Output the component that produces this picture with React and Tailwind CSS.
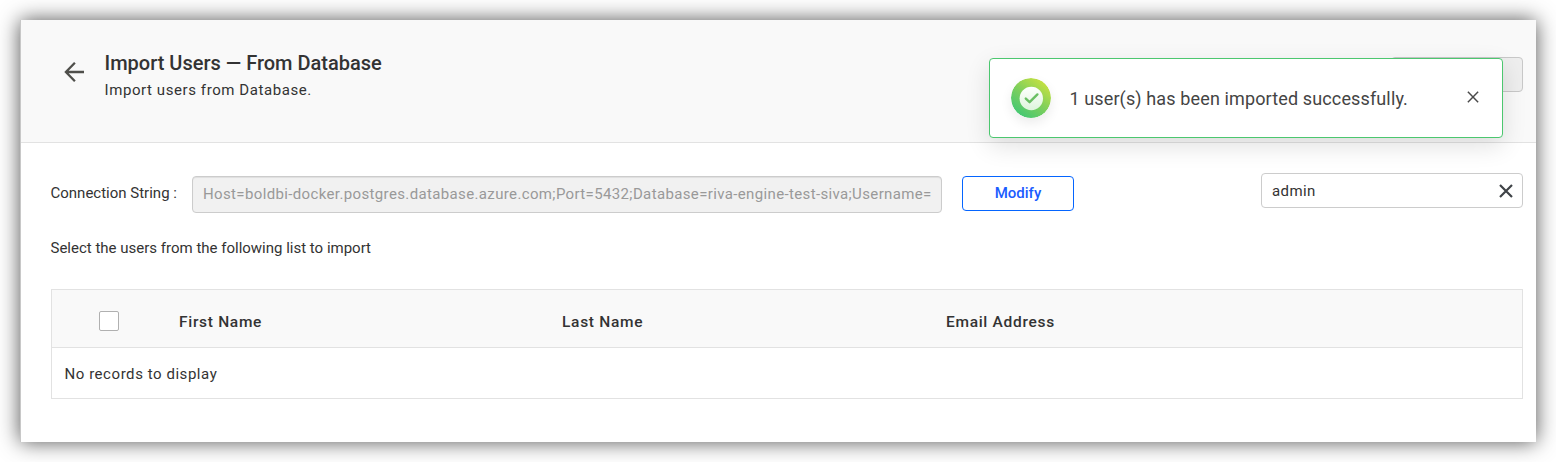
function BackArrow() {
  return (
    <svg className="h-5 w-5" viewBox="0 0 20 20" fill="none" stroke="#4f4f4b" strokeWidth="2.3">
      <path d="M20.5 10H2M10.9 0.8L1.9 10l9 9.2" />
    </svg>
  );
}

function SuccessIcon() {
  return (
    <svg className="h-10 w-10 rounded-full shadow-[0_5px_12px_rgba(0,0,0,0.08)]" viewBox="0 0 40 40" fill="none">
      <defs>
        <linearGradient id="ring" x1="8" y1="36" x2="32" y2="4" gradientUnits="userSpaceOnUse">
          <stop stopColor="#46c872" />
          <stop offset="0.5" stopColor="#7fcf5c" />
          <stop offset="1" stopColor="#c2e042" />
        </linearGradient>
        <linearGradient id="disc" x1="20" y1="8" x2="20" y2="32" gradientUnits="userSpaceOnUse">
          <stop stopColor="#ffffff" />
          <stop offset="1" stopColor="#def5dc" />
        </linearGradient>
      </defs>
      <circle cx="20" cy="20" r="20" fill="url(#ring)" />
      <circle cx="20.3" cy="20.5" r="11.7" fill="url(#disc)" />
      <path d="M14.8 20.6l3.8 3.6 7.8-7.8" stroke="#69bf63" strokeWidth="2.4" strokeLinecap="round" strokeLinejoin="round" />
    </svg>
  );
}

function Cross({ className, width }) {
  return (
    <svg className={className} viewBox="0 0 14 14" fill="none" stroke="currentColor" strokeWidth={width}>
      <path d="M1 1l12 12M13 1L1 13" />
    </svg>
  );
}

function Toast() {
  return (
    <div className="absolute top-[38px] right-[33px] flex h-20 w-[514px] items-center rounded-[4px] border border-[#4cc76f] bg-white pr-[23px] pl-[21.4px] shadow-[0_8px_24px_rgba(0,0,0,0.12)]">
      <SuccessIcon />
      <span className="mt-[2px] ml-[18px] flex-1 text-[18px] leading-6 tracking-[0.13px] text-[#444444]">1 user(s) has been imported successfully.</span>
      <Cross className="mb-[2px] h-3 w-3 text-[#4a4a4a]" width={1.7} />
    </div>
  );
}

export default function App() {
  return (
    <div className="h-[462px] w-[1556px] overflow-hidden bg-white pt-5 pl-5 font-[Roboto,sans-serif] text-[15px] text-[#333333]">
      <div className="relative flex h-[422px] w-[1516px] flex-col border-l border-[#c8c8c8] bg-white shadow-[0_0_20px_rgba(0,0,0,0.68)]">
        <header className="flex h-[123px] items-start justify-between border-b border-[#e2e2e2] bg-[#f9f9f9] pr-[13px] pl-[43px]">
          <div className="flex">
            <div className="pt-[42px]"><BackArrow /></div>
            <div className="ml-[20.5px] pt-[31px]">
              <h1 className="text-[20px] leading-6 font-medium">Import Users — From Database</h1>
              <p className="mt-[5px] leading-5 tracking-[0.58px]">Import users from Database.</p>
            </div>
          </div>
          <button className="mt-[37px] h-[35px] w-[132px] rounded-[4px] border border-[#c8c8c8] bg-[#eeeeee]" />
        </header>

        <main className="flex flex-col pr-[13px] pl-[30px]">
          <div className="mt-[30px] flex items-start">
            <label className="mt-[10px] -ml-[0.5px] w-[141.5px] leading-5">Connection String :</label>
            <div className="mt-[3px] h-[37px] w-[750px] rounded-[4px] border border-[#cccccc] bg-[#f1f1f1] px-[10px] shadow-[inset_0_1px_1px_rgba(0,0,0,0.075)]">
              <div className="leading-[35px] tracking-[0.362px] whitespace-nowrap text-[#999999]">
                Host=boldbi-docker.postgres.database.azure.com;Port=5432;Database=riva-engine-test-siva;Username=
              </div>
            </div>
            <button className="mt-[3px] ml-5 h-[35px] w-28 rounded-[4px] border border-[#0565ff] leading-[33px] font-medium text-[#1a5cff]">Modify</button>
            <div className="ml-auto flex h-[35px] w-[262px] items-center justify-between rounded-[4px] border border-[#cccccc] pr-[9px] pl-[10px]">
              <span className="leading-5 tracking-[0.4px]">admin</span>
              <Cross className="mt-[1px] h-[14px] w-[14px] text-[#3f4347]" width={2.2} />
            </div>
          </div>

          <p className="mt-[25px] -ml-[0.5px] leading-5">Select the users from the following list to import</p>

          <div className="mt-[31px] border border-[#e2e2e2]">
            <div className="flex h-[58px] items-center border-b border-[#e2e2e2] bg-[#f9f9f9] pt-[6px] text-[15.5px] leading-5 font-medium tracking-[0.7px]">
              <div className="w-[127px] pl-[47px]">
                <div className="mb-[1px] h-5 w-5 rounded-[2px] border border-[#b0b0b0] bg-white" />
              </div>
              <div className="w-[383px] pt-[1px]">First Name</div>
              <div className="w-[384px] pt-[1px]">Last Name</div>
              <div className="pt-[1px]">Email Address</div>
            </div>
            <div className="h-[50px] pl-[12.5px] leading-[52px] tracking-[0.55px]">No records to display</div>
          </div>
        </main>
        <Toast />
      </div>
    </div>
  );
}
